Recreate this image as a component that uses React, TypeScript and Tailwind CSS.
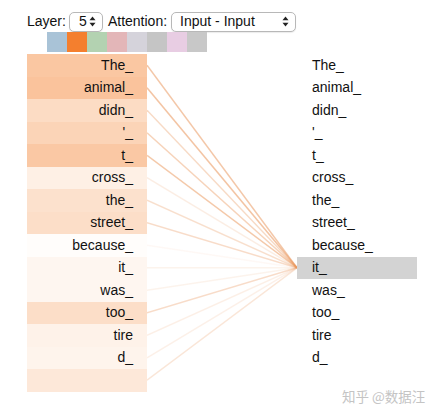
import React from 'react'

// token rows with attention weight toward the selected query token ("it_")
const rows = [
  { token: 'The_', attn: 0.44 },
  { token: 'animal_', attn: 0.47 },
  { token: 'didn_', attn: 0.28 },
  { token: "'_", attn: 0.34 },
  { token: 't_', attn: 0.43 },
  { token: 'cross_', attn: 0.12 },
  { token: 'the_', attn: 0.24 },
  { token: 'street_', attn: 0.26 },
  { token: 'because_', attn: 0.02 },
  { token: 'it_', attn: 0.07 },
  { token: 'was_', attn: 0.07 },
  { token: 'too_', attn: 0.26 },
  { token: 'tire', attn: 0.1 },
  { token: 'd_', attn: 0.09 },
  { token: '', attn: 0.18 }
]

const QUERY = 9
const ROW_H = 22.5

const swatches = ['#a9c3d7', '#f47f2e', '#b3d2b1', '#e3b6b8', '#d5d3db', '#c5c5c5', '#e8cde3', '#c8c8c8']

const Arrows = () => (
  <svg width="7" height="11" viewBox="0 0 7 11">
    <path d="M3.5 0.5 L6.5 4.2 L0.5 4.2 Z" fill="#222" />
    <path d="M3.5 10.5 L6.5 6.8 L0.5 6.8 Z" fill="#222" />
  </svg>
)

const Select = ({ value, className }: { value: string; className: string }) => (
  <div
    className={`flex h-[20px] items-center justify-between rounded-[5px] border border-[#b8b8b8] bg-white pr-[6px] shadow-[0_1px_1px_rgba(0,0,0,0.08)] ${className}`}
  >
    <span>{value}</span>
    <Arrows />
  </div>
)

export default function App() {
  const lineY = (i: number) => i * ROW_H + ROW_H / 2
  const targetY = lineY(QUERY)

  return (
    <div
      className="relative h-[413px] w-[437px] overflow-hidden bg-white pl-[27px] pt-[11px] text-[14px] text-[#111]"
      style={{ fontFamily: '"Liberation Sans", Arial, sans-serif' }}
    >
      <div className="flex h-[21px] items-center">
        <span>Layer:</span>
        <Select value="5" className="ml-[3px] w-[34px] pl-[9px]" />
        <span className="ml-[5px]">Attention:</span>
        <Select value="Input - Input" className="ml-[4px] w-[125px] pl-[8px]" />
      </div>

      <div className="ml-[20px] flex h-[20px]">
        {swatches.map((c, i) => (
          <div key={i} className="h-full w-[20px]" style={{ backgroundColor: c }} />
        ))}
      </div>

      <div className="mt-[2px] flex">
        <div className="w-[120px]">
          {rows.map((r, i) => (
            <div
              key={i}
              className="flex h-[22.5px] items-center justify-end pr-[14px]"
              style={{ backgroundColor: `rgba(244,128,44,${r.attn})` }}
            >
              {r.token}
            </div>
          ))}
        </div>

        <svg width="150" height={rows.length * ROW_H} className="block">
          {rows.map((r, i) => (
            <line
              key={i}
              x1="0"
              y1={lineY(i)}
              x2="150"
              y2={targetY}
              stroke="#e9955a"
              strokeWidth="1.5"
              strokeOpacity={Math.min(1, r.attn * 1.1 + 0.04)}
            />
          ))}
        </svg>

        <div className="w-[120px]">
          {rows.map((r, i) => (
            <div
              key={i}
              className={`flex h-[22.5px] items-center pl-[15px] ${i === QUERY ? 'bg-[#d3d3d3]' : ''}`}
            >
              {r.token}
            </div>
          ))}
        </div>
      </div>

      <div
        className="absolute left-[342px] top-[386px] text-[13.5px] text-[#c4c4c4]"
        style={{ fontFamily: '"Noto Sans CJK SC", "Liberation Sans", sans-serif' }}
      >
        知乎 @数据汪
      </div>
    </div>
  )
}
